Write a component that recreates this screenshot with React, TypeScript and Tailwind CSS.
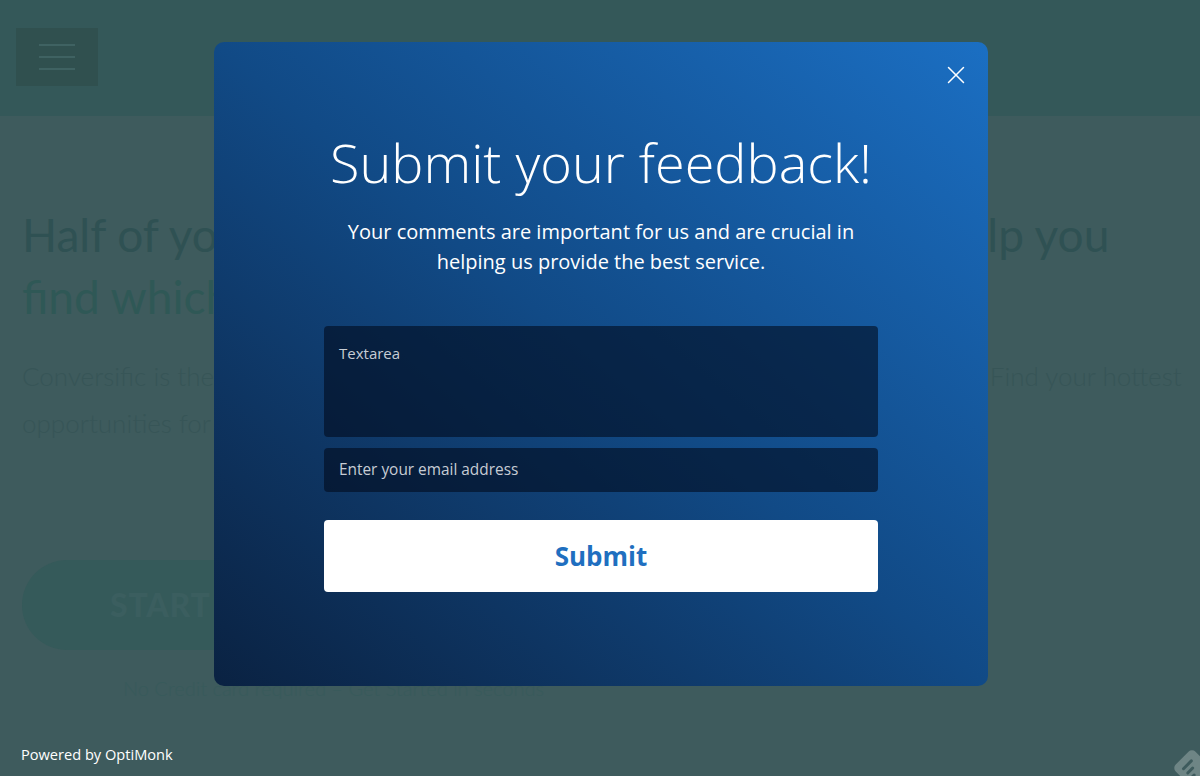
import { X } from "lucide-react";

function Hamburger() {
  return (
    <div className="ml-[16px] mt-[28px] flex h-[58px] w-[82px] flex-col items-center justify-center gap-[10px] bg-[#30504f]">
      <span className="block h-[2px] w-[36px] bg-[#3f6262]" />
      <span className="block h-[2px] w-[36px] bg-[#3f6262]" />
      <span className="block h-[2px] w-[36px] bg-[#3f6262]" />
    </div>
  );
}

function FeedbackBadge() {
  return (
    <svg className="absolute right-[-14px] bottom-[-14px]" width="44" height="44" viewBox="0 0 44 44">
      <g transform="rotate(-45 22 22)">
        <rect x="8" y="8" width="28" height="28" rx="5" fill="#6e8585" />
        <rect x="14" y="15" width="14" height="3" rx="1.5" fill="#3e5b5d" />
        <rect x="14" y="21" width="10" height="3" rx="1.5" fill="#3e5b5d" />
        <rect x="14" y="27" width="6" height="3" rx="1.5" fill="#3e5b5d" />
      </g>
    </svg>
  );
}

export default function App() {
  return (
    <div className="relative h-[776px] w-full overflow-hidden bg-[#3e5b5d] font-['Lato','Open_Sans',sans-serif]">
      {/* dimmed page behind the popup */}
      <header className="flex h-[116px] bg-[#345859]">
        <Hamburger />
      </header>
      <main className="px-[22px]">
        <h1 className="mt-[88px] whitespace-nowrap text-[46px] leading-[62px] font-normal text-[#2f5153]">
          Half of your visitors are ready to buy. We can help you
          <br />
          <span className="text-[#2f5856]">find which ones are worth your attention.</span>
        </h1>
        <p className="mt-[25px] whitespace-nowrap text-[26px] leading-[47px] font-light text-[#375557]">
          Conversific is the ecommerce analytics tool made for ecommerce online store owners. Find your hottest
          <br />
          opportunities for growth and act on them today.
        </p>
        <div className="mt-[113px] flex h-[90px] w-[330px] items-center rounded-full bg-[#355a5a] pl-[88px]">
          <span className="text-[32px] font-black tracking-wide text-[#3b5e5f]">START FREE</span>
        </div>
        <p className="mt-[24px] ml-[101px] text-[20px] leading-[28px] font-light text-[#385a5b]">
          No Credit card required – Get Started in seconds
        </p>
      </main>

      <div className="absolute top-[744px] left-[21px] font-['Open_Sans',sans-serif] text-[14.6px] leading-[20px] text-white">
        Powered by OptiMonk
      </div>
      <FeedbackBadge />

      {/* popup */}
      <div className="absolute top-[42px] left-[214px] w-[774px] rounded-[10px] bg-linear-to-tr from-[#0a2242] via-[#114a86] to-[#1b6fc3] px-[110px] pt-[88px] pb-[94px] font-['Open_Sans',sans-serif] text-white">
        <button className="absolute top-[18px] right-[17px] flex h-[30px] w-[30px] items-center justify-center text-white">
          <X size={30} strokeWidth={1.2} />
        </button>
        <h2 className="text-center text-[54px] leading-[64px] font-light">Submit your feedback!</h2>
        <p className="mx-auto mt-[23px] w-[520px] text-center text-[20px] leading-[30px]">
          Your comments are important for us and are crucial in helping us provide the best service.
        </p>
        <div className="mt-[49px] flex flex-col gap-[11px]">
          <div className="h-[111px] rounded-[4px] bg-[#000a1c]/60 px-[15px] pt-[16px] text-[15px] leading-[22px] text-[#c6ccd4]">
            Textarea
          </div>
          <div className="flex h-[44px] items-center rounded-[4px] bg-[#000a1c]/60 px-[15px] text-[15.4px] text-[#c6ccd4]">
            Enter your email address
          </div>
        </div>
        <button className="mt-[28px] flex h-[72px] w-full items-center justify-center rounded-[4px] bg-white text-[26px] font-bold text-[#1f6fc0]">
          Submit
        </button>
      </div>
    </div>
  );
}
